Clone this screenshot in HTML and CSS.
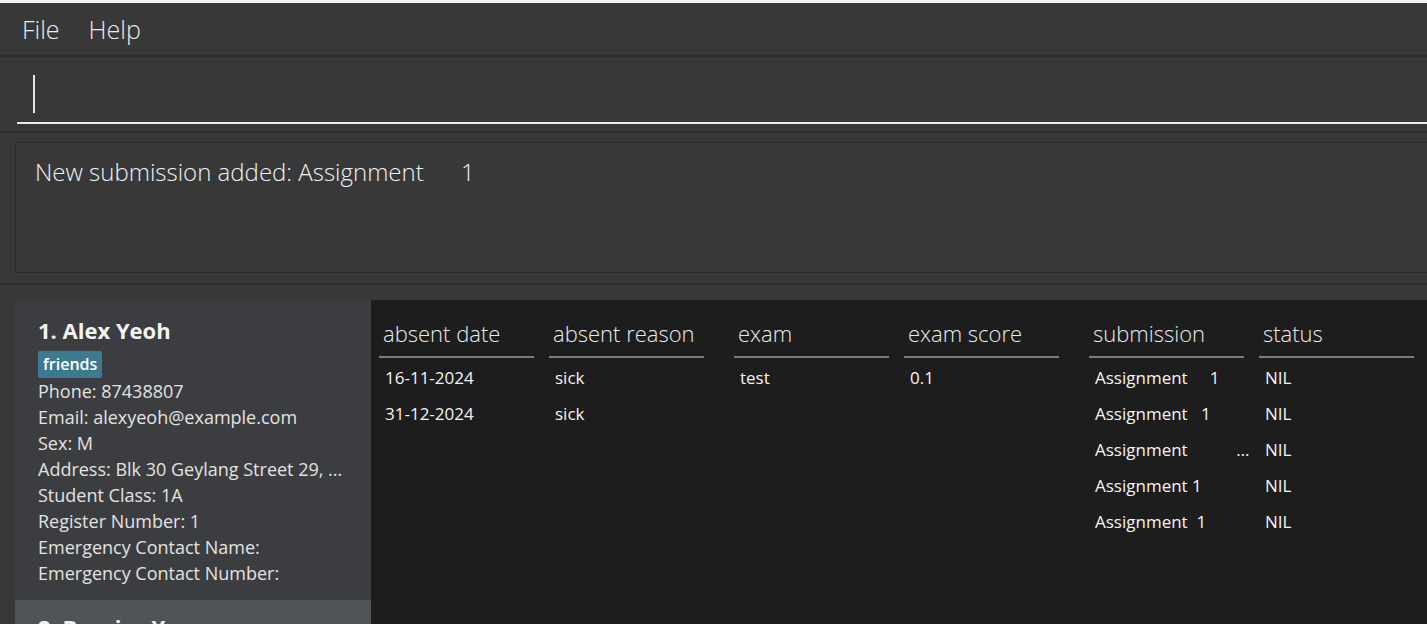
FILE: index.html
```html
<!DOCTYPE html>
<html>
<head>
<meta charset="utf-8">
<link rel="stylesheet" href="styles.css">
</head>
<body>
<div class="app">
  <div class="topstrip"></div>
  <div class="menubar">
    <span class="menu-item">File</span>
    <span class="menu-item">Help</span>
  </div>
  <div class="command">
    <div class="cmd-input"><span class="caret"></span></div>
  </div>
  <div class="result">
    <div class="result-box">New submission added: Assignment      1</div>
  </div>
  <div class="main">
    <div class="list">
      <div class="card">
        <div class="name">1. Alex Yeoh</div>
        <div class="tags"><span class="tag">friends</span></div>
        <div class="field">Phone: 87438807</div>
        <div class="field">Email: alexyeoh@example.com</div>
        <div class="field">Sex: M</div>
        <div class="field">Address: Blk 30 Geylang Street 29, ...</div>
        <div class="field">Student Class: 1A</div>
        <div class="field">Register Number: 1</div>
        <div class="field">Emergency Contact Name:</div>
        <div class="field">Emergency Contact Number:</div>
      </div>
      <div class="card alt">
        <div class="name">2. Bernice Yu</div>
      </div>
    </div>
    <div class="tables">
      <div class="tbl">
        <div class="col">
          <div class="th">absent date</div>
          <div class="td">16-11-2024</div>
          <div class="td">31-12-2024</div>
        </div>
        <div class="col">
          <div class="th">absent reason</div>
          <div class="td">sick</div>
          <div class="td">sick</div>
        </div>
      </div>
      <div class="tbl">
        <div class="col">
          <div class="th">exam</div>
          <div class="td">test</div>
        </div>
        <div class="col">
          <div class="th">exam score</div>
          <div class="td">0.1</div>
        </div>
      </div>
      <div class="tbl">
        <div class="col">
          <div class="th">submission</div>
          <div class="td pre">Assignment     1</div>
          <div class="td pre">Assignment   1</div>
          <div class="td pre">Assignment                     1</div>
          <div class="td pre">Assignment 1</div>
          <div class="td pre">Assignment  1</div>
        </div>
        <div class="col">
          <div class="th">status</div>
          <div class="td">NIL</div>
          <div class="td">NIL</div>
          <div class="td">NIL</div>
          <div class="td">NIL</div>
          <div class="td">NIL</div>
        </div>
      </div>
    </div>
  </div>
</div>
</body>
</html>
```

FILE: styles.css
```css
html, body {
  margin: 0;
  padding: 0;
  height: 100%;
  overflow: hidden;
  background: #383838;
}

.app {
  width: 1460px;
  height: 624px;
  display: flex;
  flex-direction: column;
  font-family: "Open Sans", "Noto Sans", sans-serif;
  color: #e8e8e8;
  overflow: hidden;
}

.topstrip {
  height: 3px;
  background: #f3f3f3;
  flex-shrink: 0;
}

.menubar {
  height: 52px;
  flex-shrink: 0;
  display: flex;
  align-items: center;
  padding-left: 22px;
  gap: 29px;
  border-bottom: 2px solid #2f2f2f;
  background: #383838;
}

.menu-item {
  font-size: 25px;
  font-weight: 300;
  color: #eaeaea;
  line-height: 1;
  margin-top: 1px;
}

.command {
  height: 74px;
  flex-shrink: 0;
  padding-left: 17px;
  border-bottom: 2px solid #2e2e2e;
  display: flex;
  flex-direction: column;
}

.cmd-input {
  height: 67px;
  border-bottom: 2px solid #ececec;
  display: flex;
  align-items: flex-start;
  padding-top: 18px;
  padding-left: 16px;
  box-sizing: border-box;
}

.caret {
  width: 2px;
  height: 38px;
  background: #e6e6e6;
}

.result {
  height: 152px;
  flex-shrink: 0;
  box-sizing: border-box;
  padding: 9px 0 10px 15px;
  border-bottom: 2px solid #2e2e2e;
}

.result-box {
  height: 100%;
  box-sizing: border-box;
  border: 1px solid #2c2c2c;
  padding: 14px 19px;
  font-size: 24px;
  font-weight: 300;
  color: #eef2f6;
  white-space: pre;
  line-height: 30px;
}

.main {
  flex: 1;
  display: flex;
  padding: 15px 0 0 15px;
  min-height: 0;
}

.list {
  width: 356px;
  display: flex;
  flex-direction: column;
}

.card {
  background: #3c3d40;
  padding: 15px 10px 12px 23px;
  height: 300px;
  box-sizing: border-box;
  flex-shrink: 0;
}

.card.alt {
  background: #4f5457;
  padding-top: 12px;
}

.name {
  font-size: 22px;
  font-weight: 700;
  color: #f2f2f2;
  line-height: 30px;
  margin-bottom: 6px;
}

.tags {
  display: flex;
  margin-bottom: 0;
}

.tag {
  background: #3d7a90;
  color: #ffffff;
  font-size: 16px;
  font-weight: 600;
  padding: 1px 5px 2px;
  border-radius: 2px;
  line-height: 24px;
}

.field {
  font-size: 18px;
  line-height: 26px;
  color: #e3e3e3;
  white-space: nowrap;
}

.tables {
  flex: 1;
  background: #1d1d1d;
  display: flex;
  padding: 18px 0 0 8px;
  gap: 30px;
}

.tbl {
  display: flex;
  gap: 15px;
}

.col {
  width: 155px;
  display: flex;
  flex-direction: column;
}

.th {
  font-size: 22px;
  font-weight: 300;
  color: #e8ecf0;
  padding: 0 0 8px 4px;
  line-height: 30px;
  border-bottom: 2px solid #7c7c7c;
  margin-bottom: 2px;
}

.td {
  font-size: 17px;
  color: #f4f4f4;
  line-height: 36px;
  padding-left: 6px;
  white-space: nowrap;
  overflow: hidden;
  text-overflow: ellipsis;
}

.pre {
  white-space: pre;
  margin-right: -6px;
}
```
